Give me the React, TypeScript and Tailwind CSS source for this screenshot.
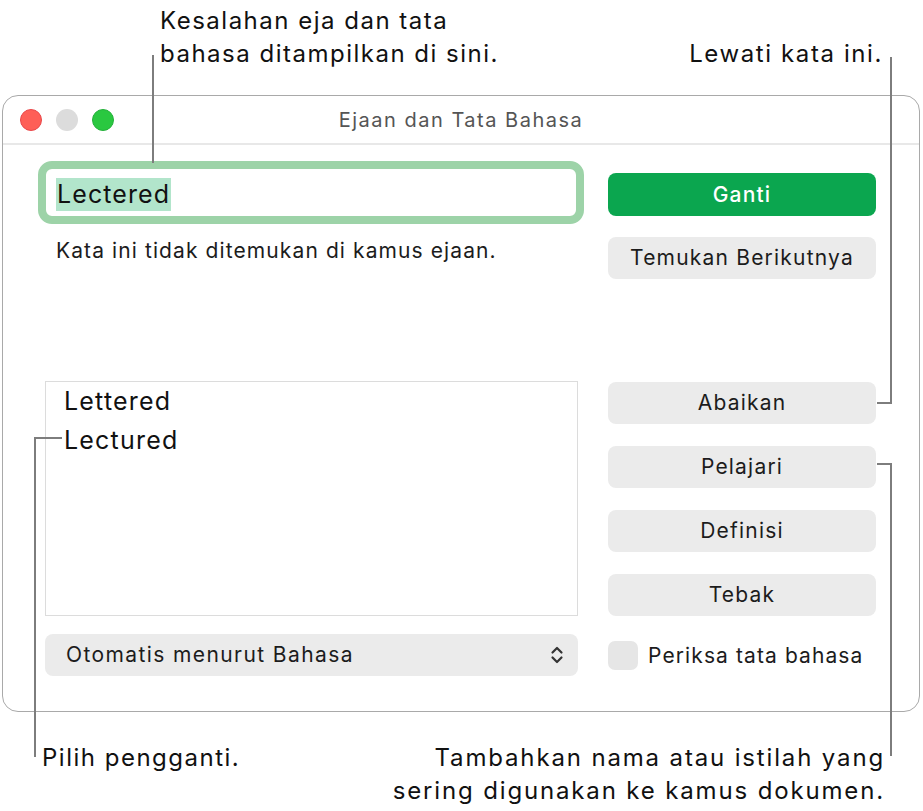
import React from "react";

const font = { fontFamily: "Inter, 'Noto Sans', sans-serif" };

function Btn({ children }: { children: React.ReactNode }) {
  return (
    <div className="h-[42px] w-full rounded-[8px] bg-[#ebebeb] flex items-center justify-center text-[21px] tracking-[1.2px] text-[#1c1c1c]">
      {children}
    </div>
  );
}

export default function App() {
  return (
    <div className="relative w-[923px] h-[811px] bg-white overflow-hidden" style={font}>
      {/* Window */}
      <div className="pt-[95px] pl-[2px]">
        <div className="w-[918px] h-[617px] rounded-[16px] border border-[#a9a9a9] bg-white flex flex-col">
          {/* Title bar */}
          <div className="relative h-[49px] border-b-[2px] border-[#e8e8e8] flex items-center">
            <div className="flex items-center gap-[14px] pl-[17px]">
              <span className="w-[22px] h-[22px] rounded-full bg-[#fe5f57] border border-[#e9474a]" />
              <span className="w-[22px] h-[22px] rounded-full bg-[#dcdcdc]" />
              <span className="w-[22px] h-[22px] rounded-full bg-[#2ac840] border border-[#24b03a]" />
            </div>
            <div className="absolute inset-0 flex items-center justify-center text-[20px] tracking-[1.5px] text-[#555555]">
              Ejaan dan Tata Bahasa
            </div>
          </div>
          {/* Content */}
          <div className="flex pl-[42px] pr-[41px]">
            {/* left column */}
            <div className="w-[533px] flex flex-col">
              <div className="mt-[16px] ml-[-7px] w-[546px] h-[63px] rounded-[14px] border-[8px] border-[#9dd3a8] bg-white flex items-center pl-[10px] pt-[3px]">
                <span className="bg-[#b2e5cb] text-[25px] leading-[33px] tracking-[1.1px] text-[#111] px-[1px]">Lectered</span>
              </div>
              <div className="mt-[15px] ml-[11px] text-[21px] leading-[24px] tracking-[1.1px] text-[#1c1c1c]">
                Kata ini tidak ditemukan di kamus ejaan.
              </div>
              <div className="mt-[118px] h-[235px] border border-[#dcdcdc] bg-white flex flex-col pt-0 pl-[18px]">
                <div className="text-[25px] leading-[39px] tracking-[1.2px] text-[#111]">Lettered</div>
                <div className="text-[25px] leading-[39px] tracking-[1.2px] text-[#111]">Lectured</div>
              </div>
              <div className="mt-[18px] h-[42px] rounded-[8px] bg-[#ebebeb] flex items-center pl-[21px] pr-[14px] text-[21px] tracking-[1.4px] text-[#1c1c1c]">
                <span className="flex-1">Otomatis menurut Bahasa</span>
                <svg width="14" height="20" viewBox="0 0 14 20" fill="none" stroke="#333" strokeWidth="2.2" strokeLinecap="round" strokeLinejoin="round">
                  <path d="M2.5 7.5 L7 3 L11.5 7.5" />
                  <path d="M2.5 12.5 L7 17 L11.5 12.5" />
                </svg>
              </div>
            </div>
            <div className="w-[30px]" />
            {/* right column */}
            <div className="w-[268px] flex flex-col">
              <div className="mt-[28px] h-[43px] w-full rounded-[8px] bg-[#0ba64f] flex items-center justify-center text-[21px] tracking-[1.2px] font-medium text-white">
                Ganti
              </div>
              <div className="mt-[21px]"><Btn>Temukan Berikutnya</Btn></div>
              <div className="mt-[103px]"><Btn>Abaikan</Btn></div>
              <div className="mt-[22px]"><Btn>Pelajari</Btn></div>
              <div className="mt-[22px]"><Btn>Definisi</Btn></div>
              <div className="mt-[22px]"><Btn>Tebak</Btn></div>
              <div className="mt-[24px] flex items-center gap-[10px]">
                <span className="w-[30px] h-[29px] rounded-[7px] bg-[#e6e6e6]" />
                <span className="text-[21px] tracking-[1.1px] text-[#1c1c1c]">Periksa tata bahasa</span>
              </div>
            </div>
          </div>
        </div>
      </div>

      {/* Annotations */}
      <div className="absolute left-[160px] top-[4px] text-[24px] leading-[33px] tracking-[1.5px] text-[#111]">
        <div>Kesalahan eja dan tata</div>
        <div>bahasa ditampilkan di sini.</div>
      </div>
      <div className="absolute right-[40px] top-[37px] text-[24px] leading-[33px] tracking-[1.6px] text-[#111]">
        Lewati kata ini.
      </div>
      <div className="absolute left-[42px] top-[741px] text-[24px] leading-[33px] tracking-[1.5px] text-[#111]">
        Pilih pengganti.
      </div>
      <div className="absolute right-[38px] top-[741px] flex flex-col items-end text-[24px] leading-[33px] tracking-[1.85px] text-[#111]">
        <div>Tambahkan nama atau istilah yang</div>
        <div>sering digunakan ke kamus dokumen.</div>
      </div>

      {/* Callout lines */}
      <div className="absolute left-[152px] top-[55px] w-[2px] h-[108px] bg-[#7d7d7d]" />
      <div className="absolute left-[890px] top-[57px] w-[2px] h-[347px] bg-[#7d7d7d]" />
      <div className="absolute left-[877px] top-[402px] w-[15px] h-[2px] bg-[#7d7d7d]" />
      <div className="absolute left-[877px] top-[463px] w-[15px] h-[2px] bg-[#7d7d7d]" />
      <div className="absolute left-[890px] top-[463px] w-[2px] h-[293px] bg-[#7d7d7d]" />
      <div className="absolute left-[34px] top-[437px] w-[28px] h-[2px] bg-[#7d7d7d]" />
      <div className="absolute left-[34px] top-[437px] w-[2px] h-[320px] bg-[#7d7d7d]" />
    </div>
  );
}
